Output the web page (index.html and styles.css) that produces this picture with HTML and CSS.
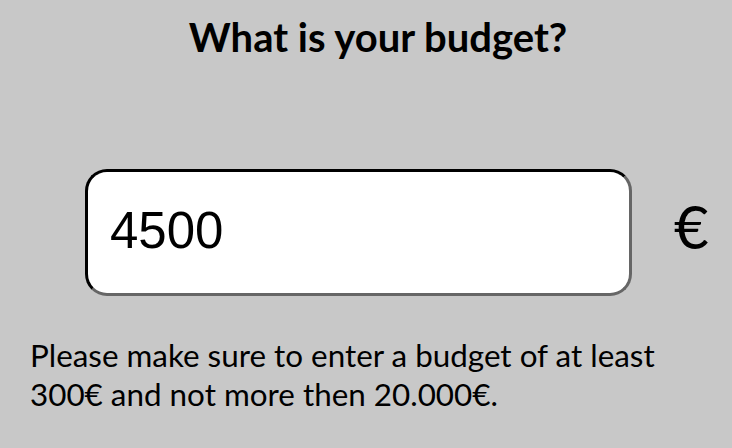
FILE: index.html
```html
<!DOCTYPE html>
<html>
<head>
<meta charset="utf-8">
<link rel="stylesheet" href="styles.css">
</head>
<body>
<main class="page">
  <h1 class="title">What is your budget?</h1>
  <div class="field-row">
    <input class="amount" type="text" value="4500">
    <span class="currency">€</span>
  </div>
  <p class="hint">Please make sure to enter a budget of at least 300€ and not more then 20.000€.</p>
</main>
</body>
</html>
```
FILE: styles.css
```css
html, body {
  margin: 0;
  padding: 0;
  background: #c8c8c8;
}
.page {
  width: 732px;
  height: 448px;
  box-sizing: border-box;
  padding: 0 6px 0 30px;
  font-family: Lato, sans-serif;
  color: #000;
}
.title {
  margin: 0;
  padding-top: 12px;
  text-align: center;
  font-size: 40px;
  font-weight: 700;
  line-height: 50px;
}
.field-row {
  display: flex;
  align-items: center;
  margin-top: 107px;
  padding-left: 55px;
}
.amount {
  width: 547px;
  height: 127px;
  box-sizing: border-box;
  border: 3px inset #333;
  border-top-color: #161616;
  border-left-color: #161616;
  border-bottom-color: #666;
  border-right-color: #666;
  border-radius: 22px;
  background: #fff;
  padding: 0 0 4px 22px;
  font-family: "Liberation Sans", Arial, sans-serif;
  font-size: 51px;
  color: #000;
  outline: none;
}
.currency {
  margin-left: 42px;
  margin-bottom: 14px;
  font-size: 60px;
}
.hint {
  margin: 40px 0 0;
  font-size: 31.4px;
  line-height: 39px;
  width: 660px;
}
```
